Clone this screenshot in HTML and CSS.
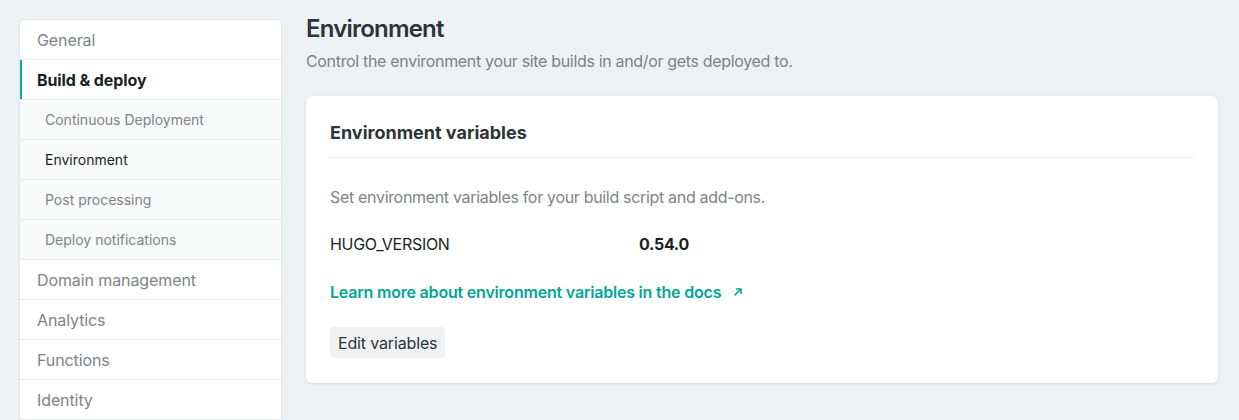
FILE: index.html
```html
<!DOCTYPE html>
<html>
<head>
<meta charset="utf-8">
<link rel="stylesheet" href="styles.css">
</head>
<body>
<div class="page">
  <nav class="sidebar">
    <a class="nav-item">General</a>
    <a class="nav-item active">Build &amp; deploy</a>
    <a class="nav-sub">Continuous Deployment</a>
    <a class="nav-sub current">Environment</a>
    <a class="nav-sub">Post processing</a>
    <a class="nav-sub">Deploy notifications</a>
    <a class="nav-item">Domain management</a>
    <a class="nav-item">Analytics</a>
    <a class="nav-item">Functions</a>
    <a class="nav-item last">Identity</a>
  </nav>
  <main class="main">
    <h1 class="title">Environment</h1>
    <p class="subtitle">Control the environment your site builds in and/or gets deployed to.</p>
    <section class="card">
      <h2 class="card-title">Environment variables</h2>
      <p class="card-desc">Set environment variables for your build script and add-ons.</p>
      <div class="var-row">
        <span class="var-key">HUGO_VERSION</span>
        <span class="var-val">0.54.0</span>
      </div>
      <a class="docs-link">Learn more about environment variables in the docs<svg class="ext" width="12" height="12" viewBox="0 0 12 12"><path d="M3 9 L9 3 M4.5 3 H9 V7.5" fill="none" stroke="currentColor" stroke-width="1.6" stroke-linecap="round" stroke-linejoin="round"/></svg></a>
      <div><button class="btn">Edit variables</button></div>
    </section>
  </main>
</div>
</body>
</html>
```
FILE: styles.css
```css
* { box-sizing: border-box; }
html, body { margin: 0; padding: 0; }
body {
  background: #eef1f4;
  font-family: Inter, "Noto Sans", sans-serif;
  color: #2e3338;
  height: 420px;
  overflow: hidden;
}
.page {
  display: flex;
  align-items: flex-start;
  padding: 0 21px 0 19px;
  gap: 24px;
}
.sidebar {
  margin-top: 19px;
  width: 263px;
  flex: none;
  display: flex;
  flex-direction: column;
  background: #fff;
  border: 1px solid #e3e6e8;
  border-bottom: none;
  border-radius: 4px 4px 0 0;
  overflow: hidden;
}
.nav-item, .nav-sub {
  display: flex;
  align-items: center;
  height: 40px;
  border-bottom: 1px solid #e6e8ea;
  text-decoration: none;
}
.nav-item {
  padding-left: 17px;
  font-size: 16px;
  letter-spacing: -0.1px;
  color: #7d8388;
}
.nav-item.active {
  color: #1a1f24;
  font-weight: 700;
  box-shadow: inset 2px 0 0 #00ad9f;
}
.nav-sub {
  padding-left: 25px;
  font-size: 14px;
  color: #7d8388;
  background: #f9fafa;
}
.nav-sub.current { color: #1a1f24; }
.main {
  flex: 1;
  min-width: 0;
}
.title {
  margin: 0;
  padding-top: 13px;
  font-size: 24px;
  font-weight: 600;
  letter-spacing: -0.8px;
  line-height: 32px;
  color: #2e3338;
}
.subtitle {
  margin: 4px 0 0;
  font-size: 16px;
  line-height: 24px;
  letter-spacing: -0.33px;
  color: #7d8388;
}
.card {
  margin-top: 23px;
  background: #fff;
  border-radius: 6px;
  box-shadow: 0 1px 3px rgba(0,0,0,0.12);
  padding: 22px 24px 25px;
}
.card-title {
  margin: 0;
  font-size: 18px;
  font-weight: 700;
  line-height: 30px;
  padding-bottom: 9px;
  border-bottom: 1px solid #eceeef;
  color: #2e3338;
}
.card-desc {
  margin: 27px 0 0;
  font-size: 16px;
  line-height: 24px;
  letter-spacing: -0.32px;
  color: #7d8388;
}
.var-row {
  display: flex;
  margin-top: 23px;
  font-size: 16px;
  line-height: 24px;
  letter-spacing: -0.3px;
  color: #1a1f24;
}
.var-key { width: 309px; }
.var-val { font-weight: 700; }
.docs-link {
  display: inline-flex;
  align-items: center;
  gap: 11px;
  margin-top: 24px;
  font-size: 16px;
  line-height: 24px;
  font-weight: 600;
  letter-spacing: -0.2px;
  color: #00a696;
  text-decoration: none;
}
.ext { color: #00a696; }
.btn {
  margin-top: 23px;
  border: none;
  background: #f0f1f2;
  border-radius: 4px;
  font-family: inherit;
  font-size: 16px;
  letter-spacing: -0.15px;
  color: #2e3338;
  height: 31px;
  padding: 0 8px;
}
```
